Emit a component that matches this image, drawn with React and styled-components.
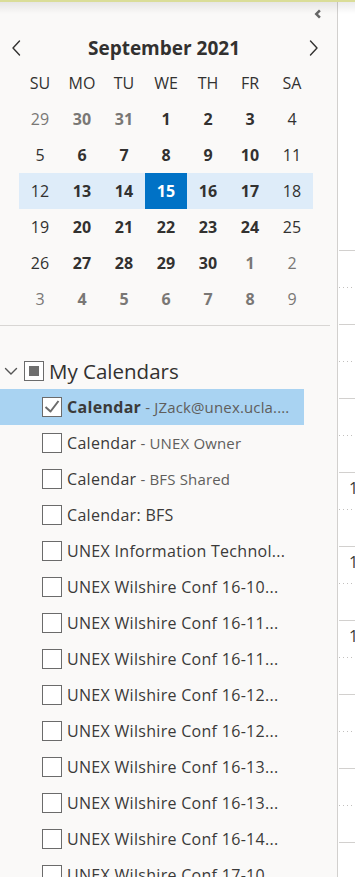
import React from "react";
import styled, { createGlobalStyle } from "styled-components";

const GlobalStyle = createGlobalStyle`
  html, body {
    margin: 0;
    padding: 0;
    background: #ffffff;
  }
  body {
    font-family: "Open Sans", "Noto Sans", sans-serif;
    color: #323130;
  }
`;

const Page = styled.div`
  position: relative;
  display: flex;
  width: 355px;
  height: 877px;
  overflow: hidden;
`;

const TopShade = styled.div`
  position: absolute;
  top: 0;
  left: 0;
  right: 0;
  height: 14px;
  pointer-events: none;
  background: linear-gradient(
    to bottom,
    #dadd98 0,
    #dadd98 2px,
    rgba(0, 0, 0, 0.08) 2px,
    rgba(0, 0, 0, 0) 14px
  );
`;

const Sidebar = styled.aside`
  width: 337px;
  flex: none;
  background: #faf9f8;
  border-right: 1px solid #d2d0ce;
`;

const CollapseRow = styled.div`
  height: 30px;
  display: flex;
  justify-content: flex-end;
  align-items: flex-start;
  padding: 9px 15px 0 0;
  box-sizing: border-box;
`;

const MonthHeader = styled.div`
  height: 35px;
  display: grid;
  grid-template-columns: 20px 1fr 20px;
  align-items: center;
  padding: 0 14px 0 7px;
`;

const NavButton = styled.button`
  border: 0;
  background: none;
  padding: 0;
  width: 20px;
  height: 20px;
  display: flex;
  align-items: center;
  justify-content: center;
  cursor: pointer;
`;

const MonthTitle = styled.div`
  text-align: center;
  font-size: 19px;
  font-weight: 700;
  color: #323130;
  padding-right: 2px;
`;

const WeekGrid = styled.div`
  margin-left: 19px;
  width: 294px;
`;

const WeekRow = styled.div`
  display: grid;
  grid-template-columns: repeat(7, 42px);
  height: 36px;
  background: ${(p) => (p.$current ? "#deecf9" : "transparent")};
`;

const DayName = styled.div`
  display: flex;
  align-items: center;
  justify-content: center;
  font-size: 16px;
  color: #323130;
`;

const DateCell = styled.div`
  display: flex;
  align-items: center;
  justify-content: center;
  font-size: 16px;
  font-weight: ${(p) => (p.$bold ? 700 : 400)};
  color: ${(p) => (p.$selected ? "#ffffff" : p.$muted ? "#797775" : "#323130")};
  background: ${(p) => (p.$selected ? "#0072c6" : "transparent")};
`;

const Separator = styled.div`
  height: 1px;
  margin: 8px 7px 0 0;
  background: #d8d6d4;
`;

const CalendarList = styled.div`
  margin-top: 27px;
  width: 304px;
`;

const GroupRow = styled.div`
  height: 36px;
  display: flex;
  align-items: center;
  padding-left: 4px;
  gap: 6px;
`;

const GroupTitle = styled.span`
  font-size: 20.5px;
  color: #323130;
  margin-left: -1px;
`;

const Box = styled.span`
  width: 20px;
  height: 20px;
  box-sizing: border-box;
  border: 1px solid #6b6b6b;
  background: #ffffff;
  display: flex;
  align-items: center;
  justify-content: center;
  flex: none;
`;

const PartialMark = styled.span`
  width: 10px;
  height: 10px;
  background: #6e6e6e;
`;

const ItemRow = styled.div`
  height: 36px;
  display: flex;
  align-items: center;
  padding-left: 42px;
  gap: 5px;
  background: ${(p) => (p.$active ? "#a9d3f2" : "transparent")};
  white-space: nowrap;
  overflow: hidden;
`;

const ItemName = styled.span`
  font-size: 16px;
  letter-spacing: 0.3px;
  color: #3b3a39;
  font-weight: ${(p) => (p.$bold ? 700 : 400)};
`;

const ItemOwner = styled.span`
  font-size: 15px;
  letter-spacing: 0.15px;
  color: #605e5c;
`;

const Schedule = styled.div`
  flex: 1;
  background: #ffffff;
  padding-top: 250px;
  padding-left: 1px;
`;

const Slot = styled.div`
  height: 74px;
  box-sizing: border-box;
  border-top: 1px solid #d2d0ce;
  position: relative;
  overflow: hidden;
`;

const HalfLine = styled.div`
  position: absolute;
  left: 0;
  right: 0;
  top: 36px;
  height: 1px;
  background: repeating-linear-gradient(
    to right,
    #c2c0be 0,
    #c2c0be 1px,
    transparent 1px,
    transparent 4px
  );
`;

const TimeLabel = styled.span`
  display: block;
  padding: 5px 0 0 10px;
  font-size: 16px;
  line-height: 20px;
  color: #3b3a39;
  white-space: nowrap;
`;

const Chevron = ({ dir = "left", size = 16, stroke = "#323130", width = 1.4 }) => (
  <svg width={size} height={size} viewBox="0 0 16 16" fill="none">
    <path
      d={dir === "left" ? "M10.5 1 L4 8 L10.5 15" : "M5.5 1 L12 8 L5.5 15"}
      stroke={stroke}
      strokeWidth={width}
      strokeLinecap="round"
      strokeLinejoin="round"
    />
  </svg>
);

const CollapseIcon = () => (
  <svg width="10" height="10" viewBox="0 0 10 10">
    <path d="M7 0.5 L8.8 2.3 L6 5 L8.8 7.7 L7 9.5 L2.5 5 Z" fill="#666666" />
  </svg>
);

const DownChevron = () => (
  <svg width="14" height="10" viewBox="0 0 14 10" fill="none">
    <path d="M1.5 2.5 L7 8 L12.5 2.5" stroke="#555" strokeWidth="1.4" strokeLinecap="round" />
  </svg>
);

const CheckMark = () => (
  <svg width="18" height="18" viewBox="0 0 18 18" fill="none">
    <path d="M2.5 9 L7.5 13.5 L15.5 3" stroke="#6b6b6b" strokeWidth="2" strokeLinejoin="round" />
  </svg>
);

const dayNames = ["SU", "MO", "TU", "WE", "TH", "FR", "SA"];

const weeks = [
  [[29, 1], [30, 1], [31, 1], [1], [2], [3], [4]],
  [[5], [6], [7], [8], [9], [10], [11]],
  [[12], [13], [14], [15], [16], [17], [18]],
  [[19], [20], [21], [22], [23], [24], [25]],
  [[26], [27], [28], [29], [30], [1, 1], [2, 1]],
  [[3, 1], [4, 1], [5, 1], [6, 1], [7, 1], [8, 1], [9, 1]],
];

const calendars = [
  { name: "Calendar", owner: "JZack@unex.ucla....", active: true },
  { name: "Calendar", owner: "UNEX Owner" },
  { name: "Calendar", owner: "BFS Shared" },
  { name: "Calendar: BFS" },
  { name: "UNEX Information Technol..." },
  { name: "UNEX Wilshire Conf 16-10..." },
  { name: "UNEX Wilshire Conf 16-11..." },
  { name: "UNEX Wilshire Conf 16-11..." },
  { name: "UNEX Wilshire Conf 16-12..." },
  { name: "UNEX Wilshire Conf 16-12..." },
  { name: "UNEX Wilshire Conf 16-13..." },
  { name: "UNEX Wilshire Conf 16-13..." },
  { name: "UNEX Wilshire Conf 16-14..." },
  { name: "UNEX Wilshire Conf 17-10..." },
];

const slots = ["", "", "", "1", "1", "1", "", "", ""];

export default function App() {
  return (
    <>
      <GlobalStyle />
      <Page>
        <Sidebar>
          <CollapseRow>
            <CollapseIcon />
          </CollapseRow>
          <MonthHeader>
            <NavButton aria-label="Previous month">
              <Chevron dir="left" />
            </NavButton>
            <MonthTitle>September 2021</MonthTitle>
            <NavButton aria-label="Next month">
              <Chevron dir="right" />
            </NavButton>
          </MonthHeader>
          <WeekGrid>
            <WeekRow>
              {dayNames.map((d) => (
                <DayName key={d}>{d}</DayName>
              ))}
            </WeekRow>
            {weeks.map((week, wi) => (
              <WeekRow key={wi} $current={wi === 2}>
                {week.map(([n, muted], di) => (
                  <DateCell
                    key={di}
                    $bold={di > 0 && di < 6}
                    $muted={!!muted}
                    $selected={wi === 2 && n === 15}
                  >
                    {n}
                  </DateCell>
                ))}
              </WeekRow>
            ))}
          </WeekGrid>
          <Separator />
          <CalendarList>
            <GroupRow>
              <DownChevron />
              <Box>
                <PartialMark />
              </Box>
              <GroupTitle>My Calendars</GroupTitle>
            </GroupRow>
            {calendars.map((c, i) => (
              <ItemRow key={i} $active={c.active}>
                <Box>{c.active && <CheckMark />}</Box>
                <span>
                  <ItemName $bold={c.active}>{c.name}</ItemName>
                  {c.owner && <ItemOwner> - {c.owner}</ItemOwner>}
                </span>
              </ItemRow>
            ))}
          </CalendarList>
        </Sidebar>
        <Schedule>
          {slots.map((t, i) => (
            <Slot key={i}>
              {t && <TimeLabel>{t}</TimeLabel>}
              <HalfLine />
            </Slot>
          ))}
        </Schedule>
        <TopShade />
      </Page>
    </>
  );
}
